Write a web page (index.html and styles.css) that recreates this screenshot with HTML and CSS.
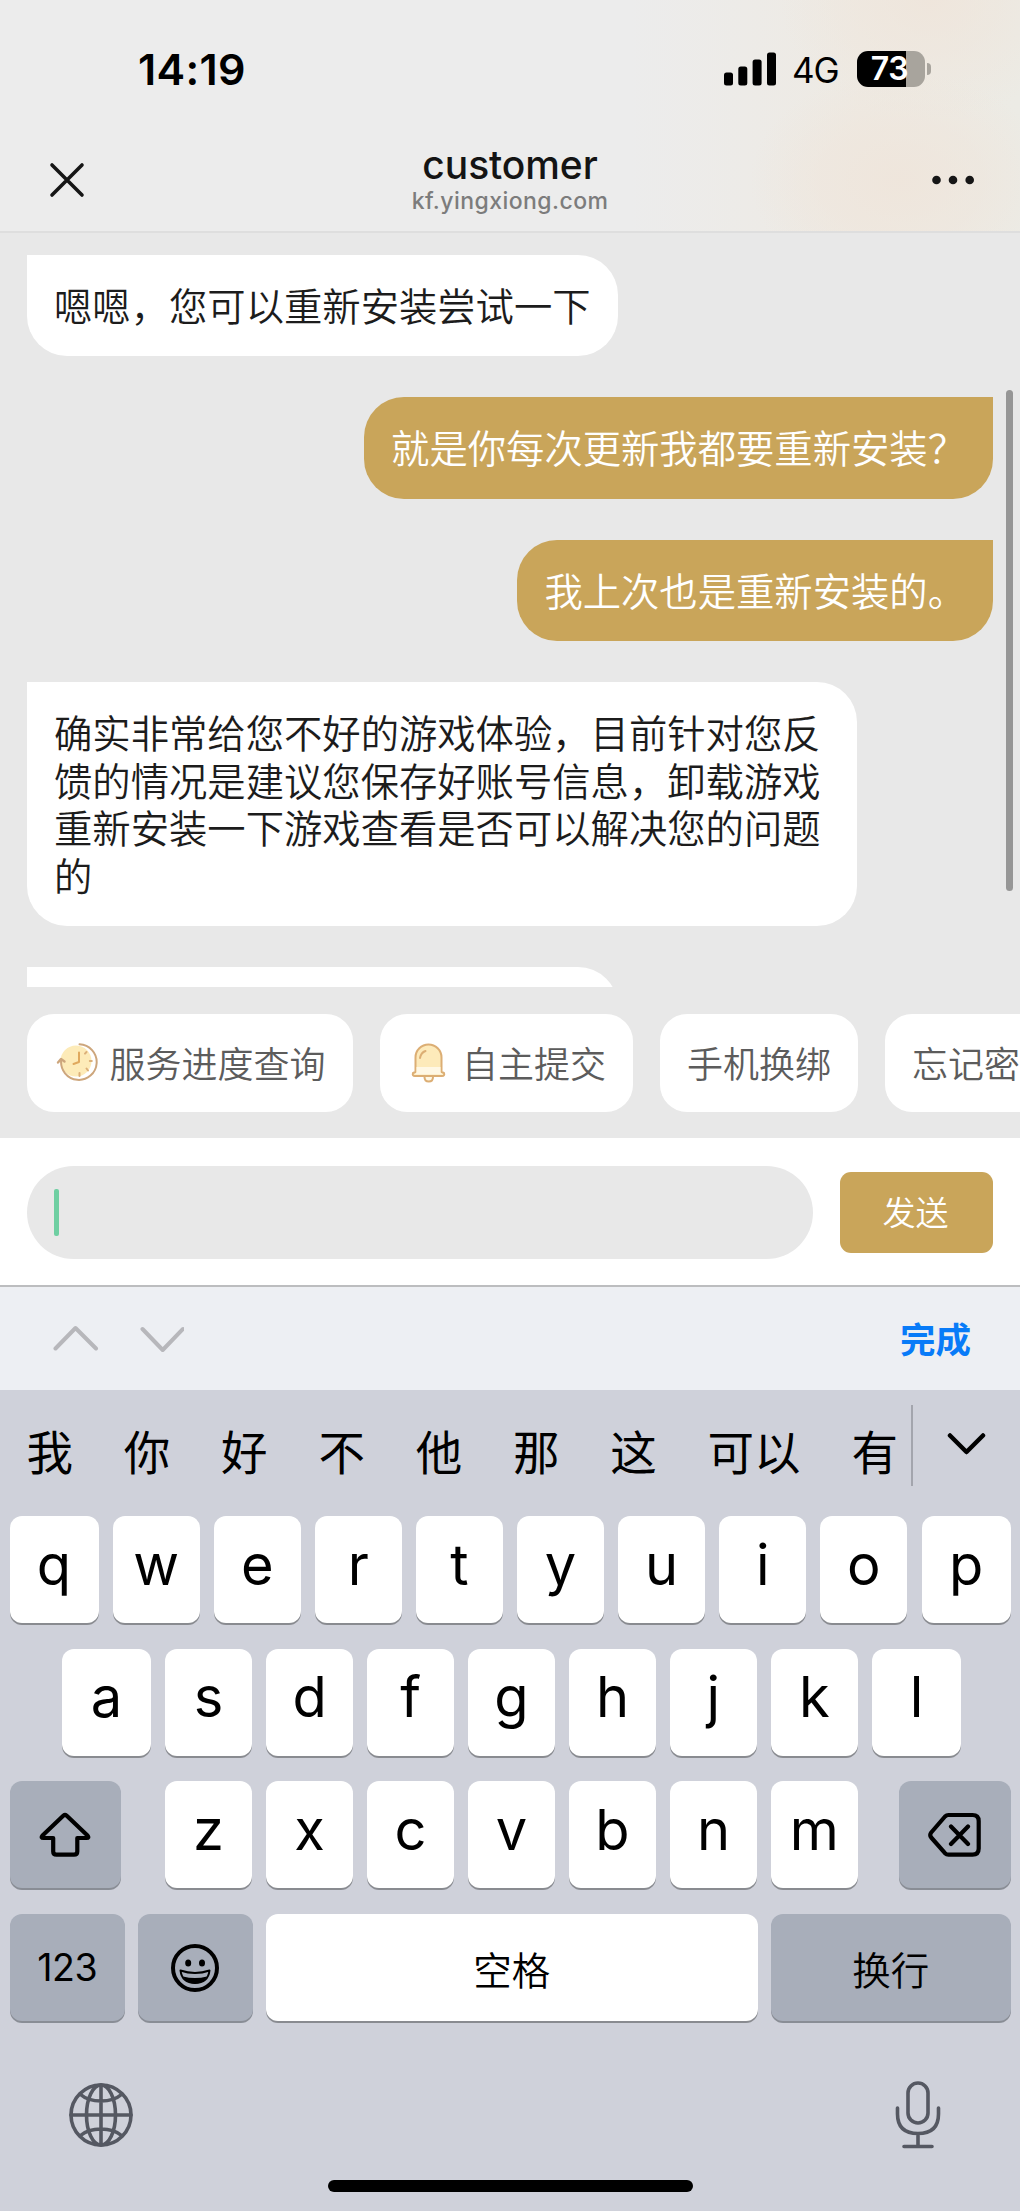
FILE: index.html
```html
<!DOCTYPE html>
<html lang="zh-CN">
<head>
<meta charset="utf-8">
<meta name="viewport" content="width=device-width">
<title>customer</title>
<link rel="stylesheet" href="styles.css">
</head>
<body>
<header class="top">
  <div class="status">
    <span class="time">14:19</span>
    <div class="status-right">
      <svg class="signal" width="52" height="34" viewBox="0 0 52 34"><rect x="0" y="20.500" width="9" height="13" rx="2.500"/><rect x="14.300" y="14.500" width="9" height="19" rx="2.500"/><rect x="28.600" y="7.500" width="9" height="26" rx="2.500"/><rect x="43" y="0.500" width="9" height="33" rx="2.500"/></svg>
      <span class="network">4G</span>
      <div class="battery"><span class="level">73</span></div>
      <span class="battery-tip"></span>
    </div>
  </div>
  <nav class="nav">
    <svg class="close" width="36" height="36" viewBox="0 0 36 36"><path d="M3 3 33 33M33 3 3 33"/></svg>
    <div class="heading">
      <h1>customer</h1>
      <p>kf.yingxiong.com</p>
    </div>
    <svg class="more" width="44" height="12" viewBox="0 0 44 12"><circle cx="5.500" cy="6" r="4.300"/><circle cx="22" cy="6" r="4.300"/><circle cx="38.700" cy="6" r="4.300"/></svg>
  </nav>
</header>

<main class="chat">
  <div class="bubble">嗯嗯，您可以重新安装尝试一下</div>
  <div class="bubble mine">就是你每次更新我都要重新安装？</div>
  <div class="bubble mine">我上次也是重新安装的。</div>
  <div class="bubble">确实非常给您不好的游戏体验，目前针对您反馈的情况是建议您保存好账号信息，卸载游戏重新安装一下游戏查看是否可以解决您的问题的</div>
  <div class="bubble partial"></div>
  <i class="scrollbar"></i>
</main>

<div class="chips">
  <div class="chip">
    <svg width="43" height="42" viewBox="0 0 43 42">
      <circle cx="21" cy="20" r="15.500" fill="#fdebb8"/>
      <g fill="none" stroke="#cda67c" stroke-width="2" stroke-linecap="round" stroke-linejoin="round">
        <path d="M24.500 3.300A17.800 17.800 0 1 1 6.200 19"/>
        <path d="M3 21.500 6 18 9.500 20.500" stroke-width="2.400"/>
        <path d="M24 11.500V21L18.500 23" stroke="#e0a95e"/>
        <path d="M31.500 11 30 12.600M34.800 20H36.800M31.500 27.500 33 29.500M24.500 32V35" stroke="#dcb079"/>
      </g>
    </svg>
    <span>服务进度查询</span>
  </div>
  <div class="chip">
    <svg width="43" height="42" viewBox="0 0 43 42">
      <path d="M8.500 31V16.500A13 13 0 0 1 34.500 16.500V31L37 32Q38 35 35 35H8Q5 35 6 32Z" fill="#fdeaba" stroke="#dcae74" stroke-width="2" stroke-linejoin="round"/>
      <path d="M9.500 26H33.500V31.500L36 33.500H7.500L9.500 31.500Z" fill="#fff8e5"/>
      <path d="M13 17Q14 11.500 18.500 10" fill="none" stroke="#dcae74" stroke-width="2" stroke-linecap="round"/>
      <path d="M17.500 36Q17.500 40.500 21.800 40.500Q26 40.500 26 36" fill="#fff8e5" stroke="#dcae74" stroke-width="2"/>
    </svg>
    <span>自主提交</span>
  </div>
  <div class="chip"><span>手机换绑</span></div>
  <div class="chip chip-last"><span>忘记密</span></div>
</div>

<div class="composer">
  <div class="input"><i class="caret"></i></div>
  <button class="send">发送</button>
</div>

<div class="accessory">
  <svg width="132" height="30" viewBox="0 0 132 30"><path d="M3.500 25.500 23.500 5 44 25.500M90.500 6 110.700 27 131 6"/></svg>
  <span class="done">完成</span>
</div>

<section class="keyboard">
  <div class="candidates">
    <div class="words"><span>我</span><span>你</span><span>好</span><span>不</span><span>他</span><span>那</span><span>这</span><span>可以</span><span>有</span></div>
    <svg class="expand" width="40" height="24" viewBox="0 0 40 24"><path d="M3 3.500 19.500 20 36 3.500"/></svg>
  </div>
  <div class="row row-edge"><b class="key">q</b><b class="key">w</b><b class="key">e</b><b class="key">r</b><b class="key">t</b><b class="key">y</b><b class="key">u</b><b class="key">i</b><b class="key">o</b><b class="key">p</b></div>
  <div class="row row-edge row-home"><b class="key">a</b><b class="key">s</b><b class="key">d</b><b class="key">f</b><b class="key">g</b><b class="key">h</b><b class="key">j</b><b class="key">k</b><b class="key">l</b></div>
  <div class="row row-split">
    <b class="key dark side"><svg width="52" height="46" viewBox="0 0 52 46"><path d="M24.500 3.600Q26 2.300 27.500 3.600L48.500 23.500Q50.500 26 47.500 26H38.300V39.500Q38.300 42.700 35 42.700H17.500Q14.200 42.700 14.200 39.500V26H4.500Q1.500 26 3.500 23.500Z"/></svg></b>
    <div class="letters"><b class="key">z</b><b class="key">x</b><b class="key">c</b><b class="key">v</b><b class="key">b</b><b class="key">n</b><b class="key">m</b></div>
    <b class="key dark side"><svg width="54" height="46" viewBox="0 0 54 46"><path d="M20.500 3H44.500Q50.700 3 50.700 9V36.500Q50.700 42.700 44.500 42.700H20.500Q18.500 42.700 17 41.200L3.200 25.500Q1.300 23 3.200 20.500L17 4.500Q18.500 3 20.500 3ZM23 14.500 40 32M40 14.500 23 32"/></svg></b>
  </div>
  <div class="row row-bottom">
    <b class="key dark num">123</b>
    <b class="key dark emoji"><svg width="50" height="50" viewBox="0 0 50 50"><circle cx="25" cy="25" r="22" stroke-width="4"/><ellipse cx="18.200" cy="20" rx="3" ry="3.500" fill="#000" stroke="none"/><ellipse cx="32" cy="20" rx="3" ry="3.500" fill="#000" stroke="none"/><path d="M10.500 27.500Q25 32.500 39.500 27.500Q38 40 25 40Q12 40 10.500 27.500Z" stroke-width="2"/><path d="M13 33.500Q25 36.500 37 33.500Q33.500 40.500 25 40.500Q16.500 40.500 13 33.500Z" fill="#000" stroke="none"/></svg></b>
    <b class="key space">空格</b>
    <b class="key dark enter">换行</b>
  </div>
  <div class="dock">
    <svg width="64" height="64" viewBox="0 0 64 64"><circle cx="32" cy="32" r="30"/><ellipse cx="32" cy="32" rx="14.500" ry="30"/><path d="M32 2V62M2 32H62M11.500 11.500Q19 18 32 18Q45 18 52.500 11.500M11.500 52.500Q19 46 32 46Q45 46 52.500 52.500"/></svg>
    <svg width="46" height="70" viewBox="0 0 46 70"><rect x="13" y="3" width="20" height="40" rx="10"/><path d="M2.500 28V34Q2.500 53.500 23 53.500Q43.500 53.500 43.500 34V28M23 53.500V66M9 66.500H37"/></svg>
  </div>
  <div class="home"></div>
</section>
</body>
</html>
```

FILE: styles.css
```css
* { box-sizing: border-box; }

body {
  margin: 0;
  width: 1020px;
  height: 2211px;
  overflow: hidden;
  display: flex;
  flex-direction: column;
  background: #e8e8e8;
  font-family: "Noto Sans CJK SC", sans-serif;
}

svg { display: block; flex: none; fill: none; }

/* top bar */
.top {
  height: 233px;
  flex: none;
  border-bottom: 2px solid #dedede;
  font-family: Inter, sans-serif;
  background:
    radial-gradient(ellipse 150px 110px at 900px 180px, rgba(239, 229, 219, .9), rgba(239, 229, 219, .5) 55%, rgba(239, 229, 219, 0)),
    radial-gradient(ellipse 150px 120px at 930px 0, rgba(239, 229, 219, .9), rgba(239, 229, 219, 0)),
    linear-gradient(90deg, #ececec 630px, #eeeae3 860px, #ecebe5 1020px);
}
.status {
  height: 128px;
  padding: 10px 89px 0 138px;
  display: flex;
  align-items: center;
  justify-content: space-between;
}
.time { font-size: 43px; font-weight: 600; letter-spacing: .3px; }
.status-right { display: flex; align-items: center; }
.signal { fill: #000; }
.network { margin: 1px 0 0 16px; width: 65px; font-size: 35px; letter-spacing: -1px; }
.battery {
  width: 68px;
  height: 36px;
  border-radius: 11px;
  background: linear-gradient(90deg, #000 49px, #a8a49d 49px);
  text-align: center;
}
.level { display: block; margin-left: -3px; color: #fff; font-size: 32px; font-weight: 600; line-height: 36px; letter-spacing: -.5px; }
.battery-tip { margin-left: 2px; width: 4px; height: 12px; border-radius: 0 5px 5px 0; background: #a8a49d; }

.nav {
  height: 103px;
  padding: 0 45px 0 49px;
  display: grid;
  grid-template-columns: 48px 1fr 52px;
  align-items: center;
}
.close { stroke: #161616; stroke-width: 3.6; stroke-linecap: round; }
.more { fill: #161616; justify-self: end; }
.heading { text-align: center; }
.heading h1 { margin: 0; font-size: 39px; font-weight: 500; line-height: 44px; letter-spacing: -.1px; color: #141414; }
.heading p { margin: 0; font-size: 23px; font-weight: 500; line-height: 29px; letter-spacing: .45px; color: #7c7c7c; }

/* conversation */
.chat {
  position: relative;
  height: 754px;
  flex: none;
  overflow: hidden;
  padding: 21.5px 27px 0;
  display: flex;
  flex-direction: column;
  align-items: flex-start;
  gap: 41px;
}
.bubble {
  flex: none;
  max-width: 830px;
  padding: 26px 27px 28px;
  border-radius: 0 40px 40px 40px;
  background: #fff;
  color: #1c1c1c;
  font-size: 38.35px;
  font-weight: 350;
  line-height: 47.5px;
}
.mine {
  align-self: flex-end;
  border-radius: 40px 0 40px 40px;
  background: #c9a55a;
  color: #fff;
}
.partial { width: 591px; height: 101px; }
.scrollbar {
  position: absolute;
  top: 157px;
  right: 7px;
  width: 7px;
  height: 501px;
  border-radius: 4px;
  background: #969696;
}

/* quick actions */
.chips {
  height: 151px;
  flex: none;
  padding: 27px 0 0 27px;
  display: flex;
  align-items: flex-start;
  gap: 27px;
  overflow: hidden;
}
.chip {
  flex: none;
  height: 98px;
  padding: 0 27px 2px;
  border-radius: 27px;
  background: #fff;
  display: flex;
  align-items: center;
  gap: 12px;
  font-size: 36px;
  font-weight: 350;
  line-height: 48px;
  color: #5c5c5c;
}
.chip svg { margin-left: .5px; }
.chip-last { width: 200px; }

/* message composer */
.composer {
  height: 147px;
  flex: none;
  padding: 2px 27px 0;
  background: #fff;
  display: flex;
  align-items: center;
  gap: 27px;
}
.input {
  flex: 1;
  height: 93px;
  padding-left: 27px;
  border-radius: 47px;
  background: #e8e8e8;
  display: flex;
  align-items: center;
}
.caret { width: 5px; height: 47px; border-radius: 2px; background: #6fcfa2; }
.send {
  width: 153px;
  height: 81px;
  border: 0;
  padding: 0 2px 3px 0;
  border-radius: 11px;
  background: #c9a55a;
  color: #fff;
  font: 350 33px/48px "Noto Sans CJK SC", sans-serif;
}

.accessory {
  height: 105px;
  flex: none;
  padding: 0 49px 1px 52px;
  border-top: 2px solid #bcbdbf;
  background: #edeff3;
  display: flex;
  align-items: center;
  justify-content: space-between;
}
.accessory svg { stroke: #b7b7bb; stroke-width: 4; stroke-linecap: round; stroke-linejoin: round; }
.done { color: #087bf8; font-size: 35.5px; font-weight: 700; line-height: 48px; }

/* keyboard */
.keyboard {
  flex: 1;
  padding: 0 9.5px;
  background: #cfd1da;
  display: flex;
  flex-direction: column;
}
.candidates { height: 126px; flex: none; display: flex; padding: 15px 23px 0 17px; }
.words {
  width: 886px;
  height: 81px;
  border-right: 2px solid #a3a5ad;
  display: flex;
  align-items: center;
  gap: 50.800px;
  padding-top: 8px;
  font-size: 46.5px;
  line-height: 60px;
  white-space: nowrap;
}
.expand { margin: 27px 0 0 34px; stroke: #000; stroke-width: 4.5; stroke-linecap: round; stroke-linejoin: round; }

.row { display: flex; gap: 14.3px; height: 107px; margin-bottom: 25.7px; flex: none; }
.row-home { padding: 0 49.5px 0 52.5px; }
.row-split { justify-content: space-between; gap: 0; }
.row-bottom { gap: 13px; margin-bottom: 0; }
.letters { display: flex; gap: 14.3px; width: 692.5px; margin-left: 3px; }
.key {
  flex: 1;
  display: flex;
  align-items: center;
  justify-content: center;
  padding-bottom: 10px;
  border-radius: 12px;
  background: #fff;
  box-shadow: 0 2px 0 #898b90;
  color: #000;
  font: 400 56px/70px Inter, sans-serif;
}
.row-edge .key:first-child, .row-edge .key:last-child { flex: none; width: 89px; }
.dark { background: #a8aeba; padding: 0; box-shadow: 0 2px 0 #898d95; }
.dark svg { stroke: #000; stroke-width: 4.2; stroke-linejoin: round; stroke-linecap: round; }
.side { flex: none; width: 111.5px; }
.num { flex: none; width: 115.5px; font-size: 37.5px; letter-spacing: -.5px; }
.emoji { flex: none; width: 114.5px; }
.space, .enter { padding: 0; font: 350 38.5px/56px "Noto Sans CJK SC", sans-serif; }
.enter { flex: none; width: 239.5px; }

.dock {
  margin-top: 59px;
  padding: 0 70px 0 59px;
  height: 70px;
  display: flex;
  align-items: center;
  justify-content: space-between;
}
.dock svg { stroke: #555862; stroke-width: 3.6; stroke-linecap: round; }
.home { width: 365px; height: 12px; margin: 30px auto 0; border-radius: 6px; background: #000; }
```
